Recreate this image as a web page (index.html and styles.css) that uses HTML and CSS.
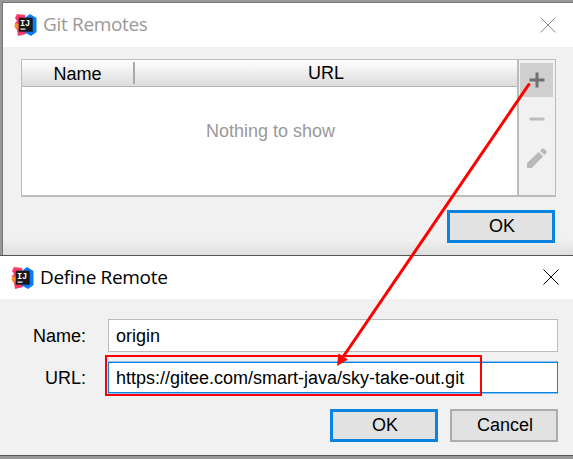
FILE: index.html
```
<!DOCTYPE html>
<html lang="en">
<head>
<meta charset="utf-8">
<title>Git Remotes</title>
<link rel="stylesheet" href="styles.css">
</head>
<body>
<svg class="defs" width="0" height="0" aria-hidden="true">
  <defs>
    <linearGradient id="warm" x1="0" y1="0" x2="0" y2="1"><stop offset="0" stop-color="#fc386d"/><stop offset=".38" stop-color="#fc386d"/><stop offset=".5" stop-color="#ff9a1f"/><stop offset=".65" stop-color="#fb7a3c"/><stop offset=".78" stop-color="#fc386d"/></linearGradient>
    <symbol id="idea" viewBox="0 0 24 24">
      <path d="M3 1 11 2 13 12 12 21 4 23 3 17 .5 14 1 10 3 8 1 5Z" fill="url(#warm)"/>
      <path d="M12 4 16 1 22.5 5 22.5 19 17 23 10 19Z" fill="#087cfa"/>
      <rect x="4.7" y="4.7" width="14" height="14" fill="#181818"/>
      <text x="6" y="12.6" class="logo-text">IJ</text>
      <rect x="6.5" y="15.5" width="5" height="1.2" fill="#fff"/>
    </symbol>
  </defs>
</svg>
<main class="screen">
  <section class="window remotes">
    <header class="titlebar">
      <svg class="logo" width="24" height="24"><use href="#idea"/></svg>
      <h1>Git Remotes</h1>
      <svg class="close" width="16" height="16" viewBox="0 0 16 16"><path d="M.5.5l15 15M15.5.5l-15 15"/></svg>
    </header>
    <div class="table-panel">
      <div class="table">
        <div class="table-head"><span class="col-name">Name</span><span class="col-url">URL</span></div>
        <p class="empty">Nothing to show</p>
      </div>
      <div class="tools">
        <span class="tool active"><svg width="16" height="16"><path d="M8 .5v15M.5 8h15" stroke="#707070" stroke-width="3"/></svg></span>
        <span class="tool"><svg width="16" height="16"><path d="M.5 8h15" stroke="#bdbdbd" stroke-width="3"/></svg></span>
        <span class="tool"><svg width="20" height="20" fill="#b9b9b9"><path d="M0 20v-5L11.7 4l4.4 4.4L4.6 20ZM13 2.8 15 .7q1-1 2 0l2.4 2.4q1 1 0 2L17.4 7Z"/></svg></span>
      </div>
    </div>
    <button class="button primary">OK</button>
  </section>
  <section class="window define">
    <header class="titlebar">
      <svg class="logo" width="24" height="24"><use href="#idea"/></svg>
      <h1>Define Remote</h1>
      <svg class="close" width="16" height="16" viewBox="0 0 16 16"><path d="M.5.5l15 15M15.5.5l-15 15"/></svg>
    </header>
    <div class="form">
      <span class="label">Name:</span><div class="field">origin</div>
      <span class="label">URL:</span><div class="field focused">https://gitee.com/smart-java/sky-take-out.git</div>
    </div>
    <footer class="actions"><button class="button primary">OK</button><button class="button">Cancel</button></footer>
  </section>
  <svg class="annotation" width="573" height="459">
    <rect x="106" y="356" width="375" height="39" fill="none" stroke="#f00" stroke-width="2"/>
    <path d="M529.5 83.5 343 357" stroke="#f00" stroke-width="3" fill="none"/>
    <path d="M337 366 338.5 353.5 343 356.5 348 359.5Z" fill="#f00"/>
  </svg>
</main>
</body>
</html>
```
FILE: styles.css
```
* { box-sizing: border-box; }
body { margin: 0; font: 18px/22px "Liberation Sans", Arial, sans-serif; color: #000; overflow: hidden; }
.defs { position: absolute; }
.logo-text { font: bold 8.5px "Liberation Mono", monospace; fill: #fff; }
.screen { position: relative; width: 573px; height: 459px; background: #989898; padding-top: 2px; }
.window { background: #f1f1f1; }
.titlebar { display: flex; align-items: center; background: #fff; }
.titlebar h1 { margin: 0 auto 0 0; padding-bottom: 2px; font: 400 19px/24px "Open Sans", "Noto Sans", sans-serif; letter-spacing: -.33px; }
.logo { flex: none; }
.close { stroke: #000; stroke-width: 1; fill: none; }

.remotes { height: 253px; margin-left: 2px; border-top: 1px solid #777; border-left: 1px solid #777; background: linear-gradient(#f1f1f1 236px, #dedede 252px); }
.remotes .titlebar { height: 44px; padding: 0 17px 1px 11px; gap: 5px; }
.remotes h1 { color: #999; }
.remotes .close { stroke: #888; }
.table-panel { display: flex; width: 535px; height: 138px; margin: 12px 0 0 18px; border: 1px solid #bcbcbc; border-bottom-width: 2px; }
.table { width: 495px; background: #fff; }
.table-head { display: flex; align-items: center; height: 27px; border-bottom: 1px solid #b5b5b5; background: linear-gradient(#fff, #dcdcdc); text-align: center; }
.col-name { width: 113px; height: 22px; line-height: 24px; border-right: 2px solid #a9a9a9; }
.col-url { flex: 1; line-height: 24px; }
.empty { margin: 33px 0 0; padding-left: 2px; text-align: center; color: #999; }
.tools { display: flex; flex-direction: column; flex: 1; gap: 5px; padding: 3px 2px 3px 1px; border-left: 2px solid #bcbcbc; }
.tool { display: flex; align-items: center; justify-content: center; height: 34px; }
.active { background: #cfcfcf; }

.button { width: 108px; height: 33px; padding: 0 0 1px 2px; border: 2px solid #adadad; background: #e2e2e2; font: inherit; color: inherit; }
.primary { border: 3px solid #0a84e0; }
.remotes .button { display: block; margin: 13px 0 0 444px; }

.define { height: 201px; border: solid #555; border-width: 1px 0; }
.define .titlebar { height: 43px; padding: 0 14px 0 11px; gap: 5px; }
.define .close { margin-top: -1px; }
.form { display: grid; grid-template-columns: 86px 450px; grid-template-rows: 33px 33px; column-gap: 22px; row-gap: 9px; margin-top: 20px; align-items: center; }
.label { text-align: right; }
.field { height: 33px; padding: 5px 7px; border: 1px solid #bcbcbc; background: #fff; white-space: nowrap; }
.focused { border-color: #8cc3ee #0a84e0; box-shadow: inset 0 1px #0a84e0, inset 0 -1px #0a84e0; }
.actions { display: flex; justify-content: flex-end; gap: 12px; margin: 15px 15px 0 0; }
.annotation { position: absolute; left: 0; top: 0; }
```
